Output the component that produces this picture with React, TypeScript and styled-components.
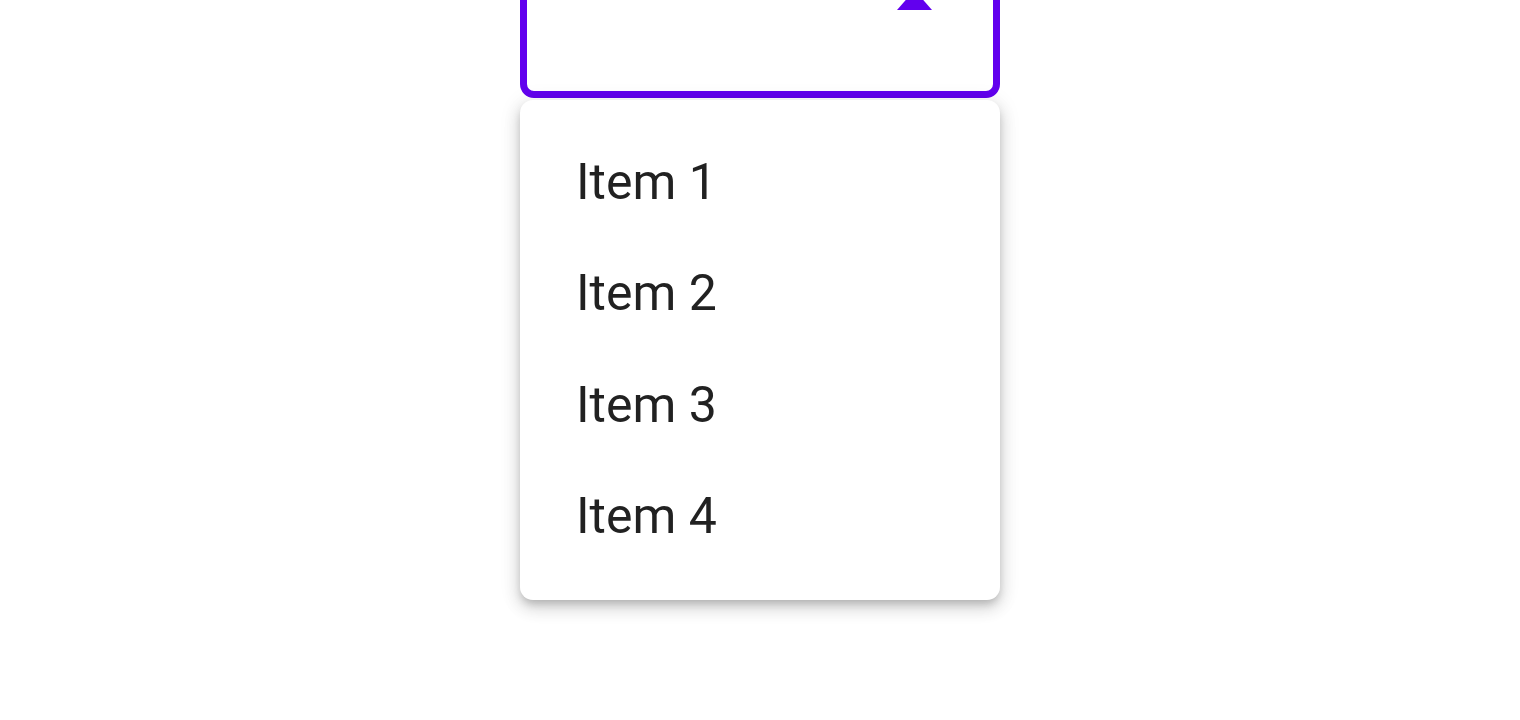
import React from 'react';
import styled, { createGlobalStyle } from 'styled-components';

const GlobalStyle = createGlobalStyle`
  html, body {
    margin: 0;
    padding: 0;
    background: #ffffff;
    overflow: hidden;
  }
  body {
    font-family: Roboto, "Noto Sans", "Liberation Sans", sans-serif;
  }
`;

const Page = styled.div`
  width: 1520px;
  height: 720px;
  display: flex;
  justify-content: center;
  align-items: flex-start;
`;

const Select = styled.div`
  width: 480px;
  display: flex;
  flex-direction: column;
`;

const Field = styled.div`
  box-sizing: border-box;
  width: 480px;
  height: 158px;
  margin-top: -60px;
  border: 7px solid #6200ee;
  border-radius: 14px;
  display: flex;
  justify-content: flex-end;
  align-items: flex-start;
  padding: 43px 61px 0 0;
`;

const Arrow = styled.svg`
  display: block;
  width: 35px;
  height: 20px;
  fill: #6200ee;
`;

const Menu = styled.ul`
  box-sizing: border-box;
  list-style: none;
  margin: 2px 0 0;
  padding: 26px 0 28px;
  background: #ffffff;
  border-radius: 13px;
  box-shadow: 0 5px 8px -2px rgba(0, 0, 0, 0.2), 0 8px 16px 2px rgba(0, 0, 0, 0.1),
    0 3px 20px 3px rgba(0, 0, 0, 0.08);
`;

const Item = styled.li`
  height: 111.5px;
  display: flex;
  align-items: center;
  padding-left: 56px;
  font-size: 50px;
  color: rgba(0, 0, 0, 0.87);
`;

const items = ['Item 1', 'Item 2', 'Item 3', 'Item 4'];

export default function App() {
  return (
    <>
      <GlobalStyle />
      <Page>
        <Select>
          <Field>
            <Arrow viewBox="0 0 35 20">
              <polygon points="17.5,0 35,20 0,20" />
            </Arrow>
          </Field>
          <Menu>
            {items.map(label => (
              <Item key={label}>{label}</Item>
            ))}
          </Menu>
        </Select>
      </Page>
    </>
  );
}
